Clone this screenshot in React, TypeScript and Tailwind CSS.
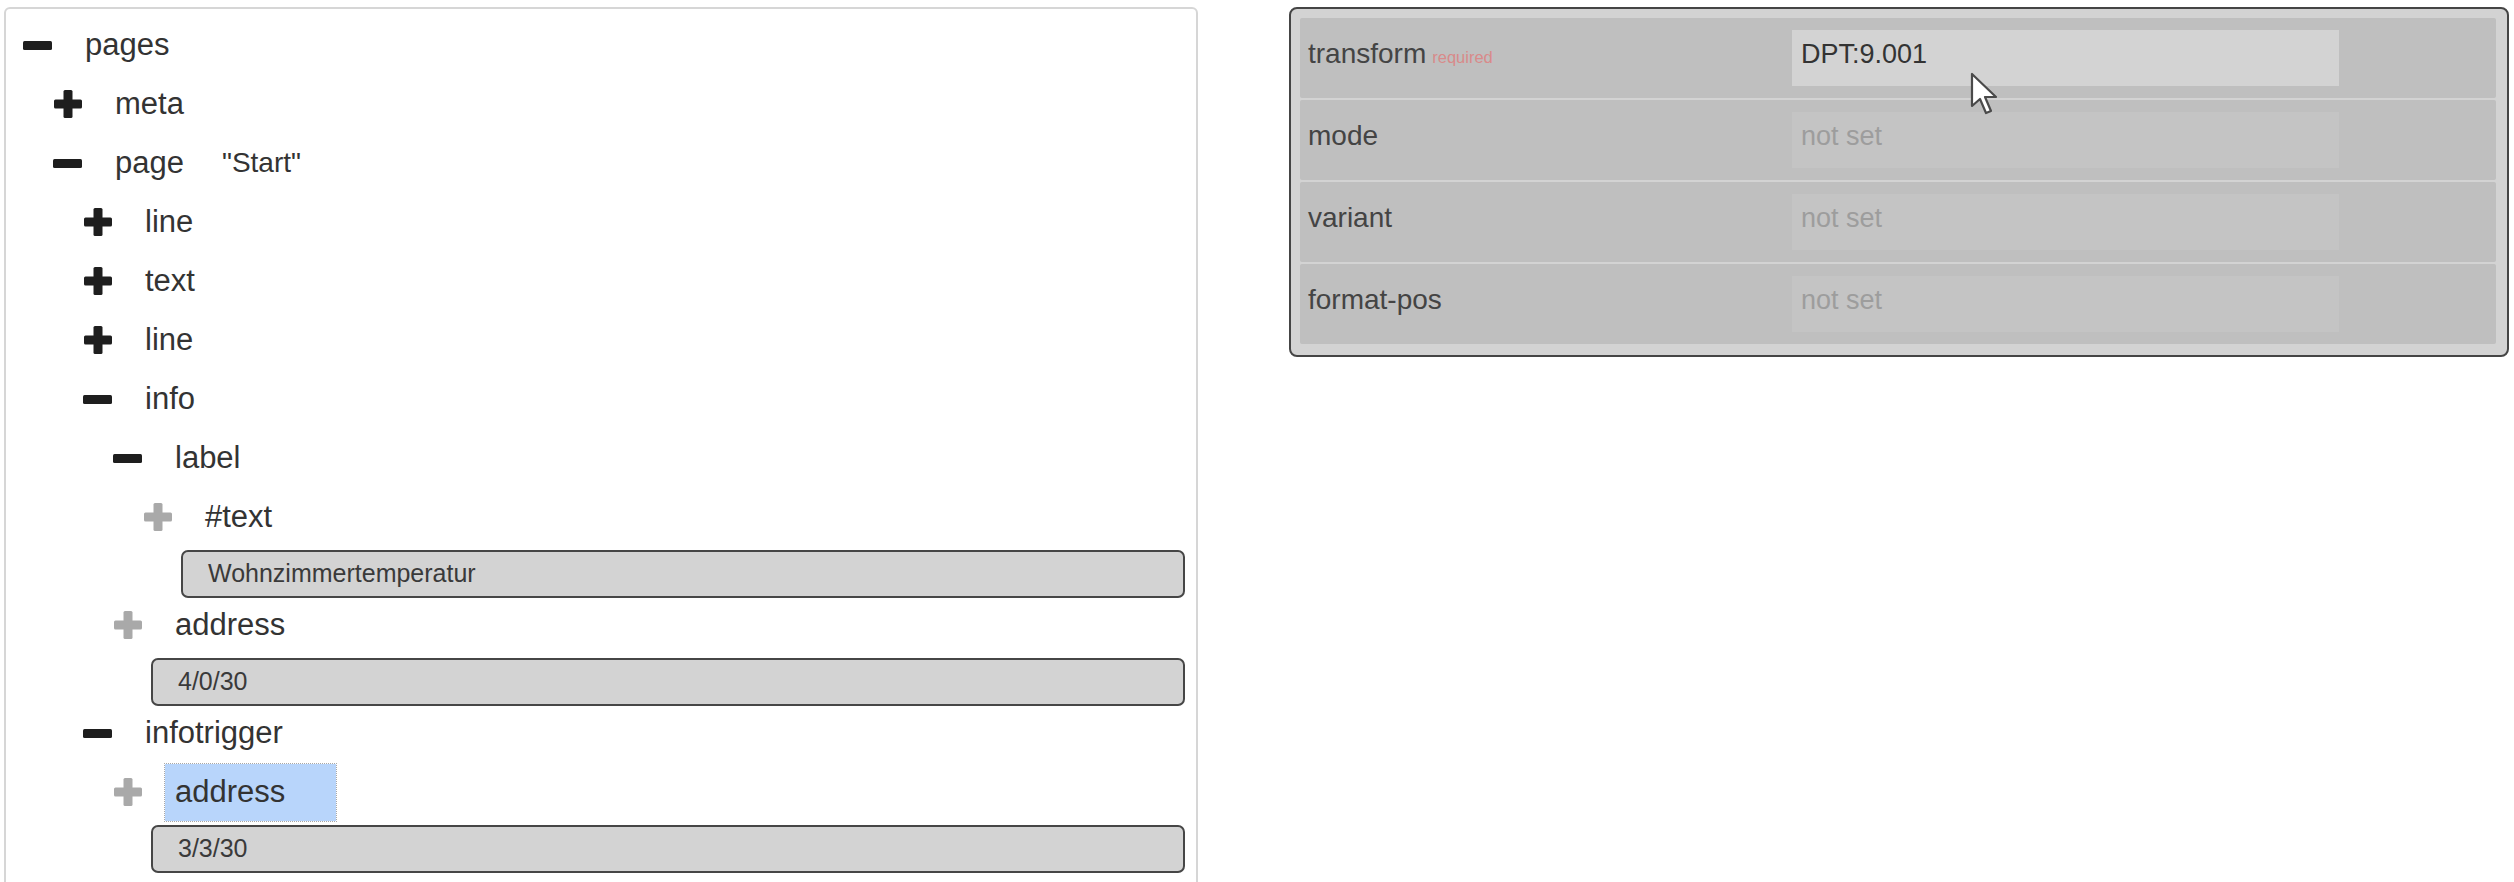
import React from "react";

type Node = {
  name: string;
  depth: number;
  icon: "minus" | "plus" | "leaf";
  extra?: string;
  value?: string;
  selected?: boolean;
};

const nodes: Node[] = [
  { name: "pages", depth: 0, icon: "minus" },
  { name: "meta", depth: 1, icon: "plus" },
  { name: "page", depth: 1, icon: "minus", extra: "\"Start\"" },
  { name: "line", depth: 2, icon: "plus" },
  { name: "text", depth: 2, icon: "plus" },
  { name: "line", depth: 2, icon: "plus" },
  { name: "info", depth: 2, icon: "minus" },
  { name: "label", depth: 3, icon: "minus" },
  { name: "#text", depth: 4, icon: "leaf", value: "Wohnzimmertemperatur" },
  { name: "address", depth: 3, icon: "leaf", value: "4/0/30" },
  { name: "infotrigger", depth: 2, icon: "minus" },
  { name: "address", depth: 3, icon: "leaf", value: "3/3/30", selected: true },
];

// full class names per depth so tailwind picks them up
const rowIndent = ["ml-0", "ml-[30px]", "ml-[60px]", "ml-[90px]", "ml-[120px]"];
const boxIndent = ["ml-[38px]", "ml-[68px]", "ml-[98px]", "ml-[128px]", "ml-[158px]"];

const attributes = [
  { name: "transform", required: true, value: "DPT:9.001" },
  { name: "mode" },
  { name: "variant" },
  { name: "format-pos" },
];

const TreeIcon = ({ kind }: { kind: Node["icon"] }) => {
  if (kind === "minus") {
    return (
      <svg width="29" height="9" viewBox="0 0 29 9">
        <rect x="0" y="0" width="29" height="9" rx="1.5" fill="#1e1e1e" />
      </svg>
    );
  }
  const color = kind === "plus" ? "#1e1e1e" : "#a9a9a9";
  return (
    <svg width="28" height="28" viewBox="0 0 28 28">
      <rect x="0" y="9.5" width="28" height="9" rx="1.5" fill={color} />
      <rect x="9.5" y="0" width="9" height="28" rx="1.5" fill={color} />
    </svg>
  );
};

const TreeRow = ({ node }: { node: Node }) => (
  <>
    <div className={`flex items-center h-[59px] ${rowIndent[node.depth]}`}>
      <div className="w-[29px] flex justify-center">
        <TreeIcon kind={node.icon} />
      </div>
      {node.selected ? (
        <span className="ml-[23px] pl-[10px] w-[171px] h-[57px] flex items-center bg-[#b8d5fb] outline-1 outline-dotted outline-[#a8a8a8] text-[31px] text-[#333]">
          {node.name}
        </span>
      ) : (
        <span className="ml-[23px] px-[10px] text-[31px] text-[#333]">{node.name}</span>
      )}
      {node.extra && <span className="ml-[28px] text-[28px] text-[#333]">{node.extra}</span>}
    </div>
    {node.value && (
      <div
        className={`mt-[3px] mb-[-2px] h-[48px] flex items-center border-2 border-[#464646] rounded-[7px] bg-[#d3d3d3] pl-[25px] text-[25px] text-[#3a3a3a] ${boxIndent[node.depth]}`}
      >
        {node.value}
      </div>
    )}
  </>
);

const Cursor = () => (
  <svg
    className="absolute left-[1970px] top-[72px]"
    width="30"
    height="46"
    viewBox="0 0 30 46"
  >
    <path
      d="M2 2 L2 34 L10 27 L16 41 L21 39 L15 25 L26 25 Z"
      fill="#ffffff"
      stroke="#4a4a4a"
      strokeWidth="2.2"
      strokeLinejoin="round"
    />
  </svg>
);

export default function App() {
  return (
    <div className="relative h-[882px] w-[2514px] overflow-hidden bg-white font-['Liberation_Sans',Arial,sans-serif]">
      <div className="flex items-start">
        {/* tree */}
        <div className="ml-[4px] mt-[7px] w-[1194px] border-2 border-[#d6d6d6] rounded-[6px] pt-[6.5px] pl-[17px] pr-[11px] pb-[40px]">
          {nodes.map((n, i) => (
            <TreeRow key={i} node={n} />
          ))}
        </div>

        {/* attribute editor */}
        <div className="ml-[91px] mt-[7px] w-[1220px] border-2 border-[#454545] rounded-[8px] bg-[#d3d3d3] pt-[9px] pl-[9px] pr-[11px] pb-[11px] flex flex-col gap-[2px]">
          {attributes.map((a) => (
            <div key={a.name} className="h-[80px] flex bg-[#bfbfbf] rounded-[2px]">
              <div className="w-[492px] pl-[8px] pt-[15px] text-[28px] text-[#444]">
                {a.name}
                {a.required && <span className="ml-[6px] text-[16.5px] text-[#d98a8a]">required</span>}
              </div>
              <div
                className={`mt-[12px] w-[547px] h-[56px] pl-[9px] pt-[4px] text-[27px] ${
                  a.value ? "bg-[#d3d3d3] text-[#333]" : "bg-[#c4c4c4] text-[#9d9d9d]"
                }`}
              >
                {a.value ?? "not set"}
              </div>
            </div>
          ))}
        </div>
      </div>
      <Cursor />
    </div>
  );
}
